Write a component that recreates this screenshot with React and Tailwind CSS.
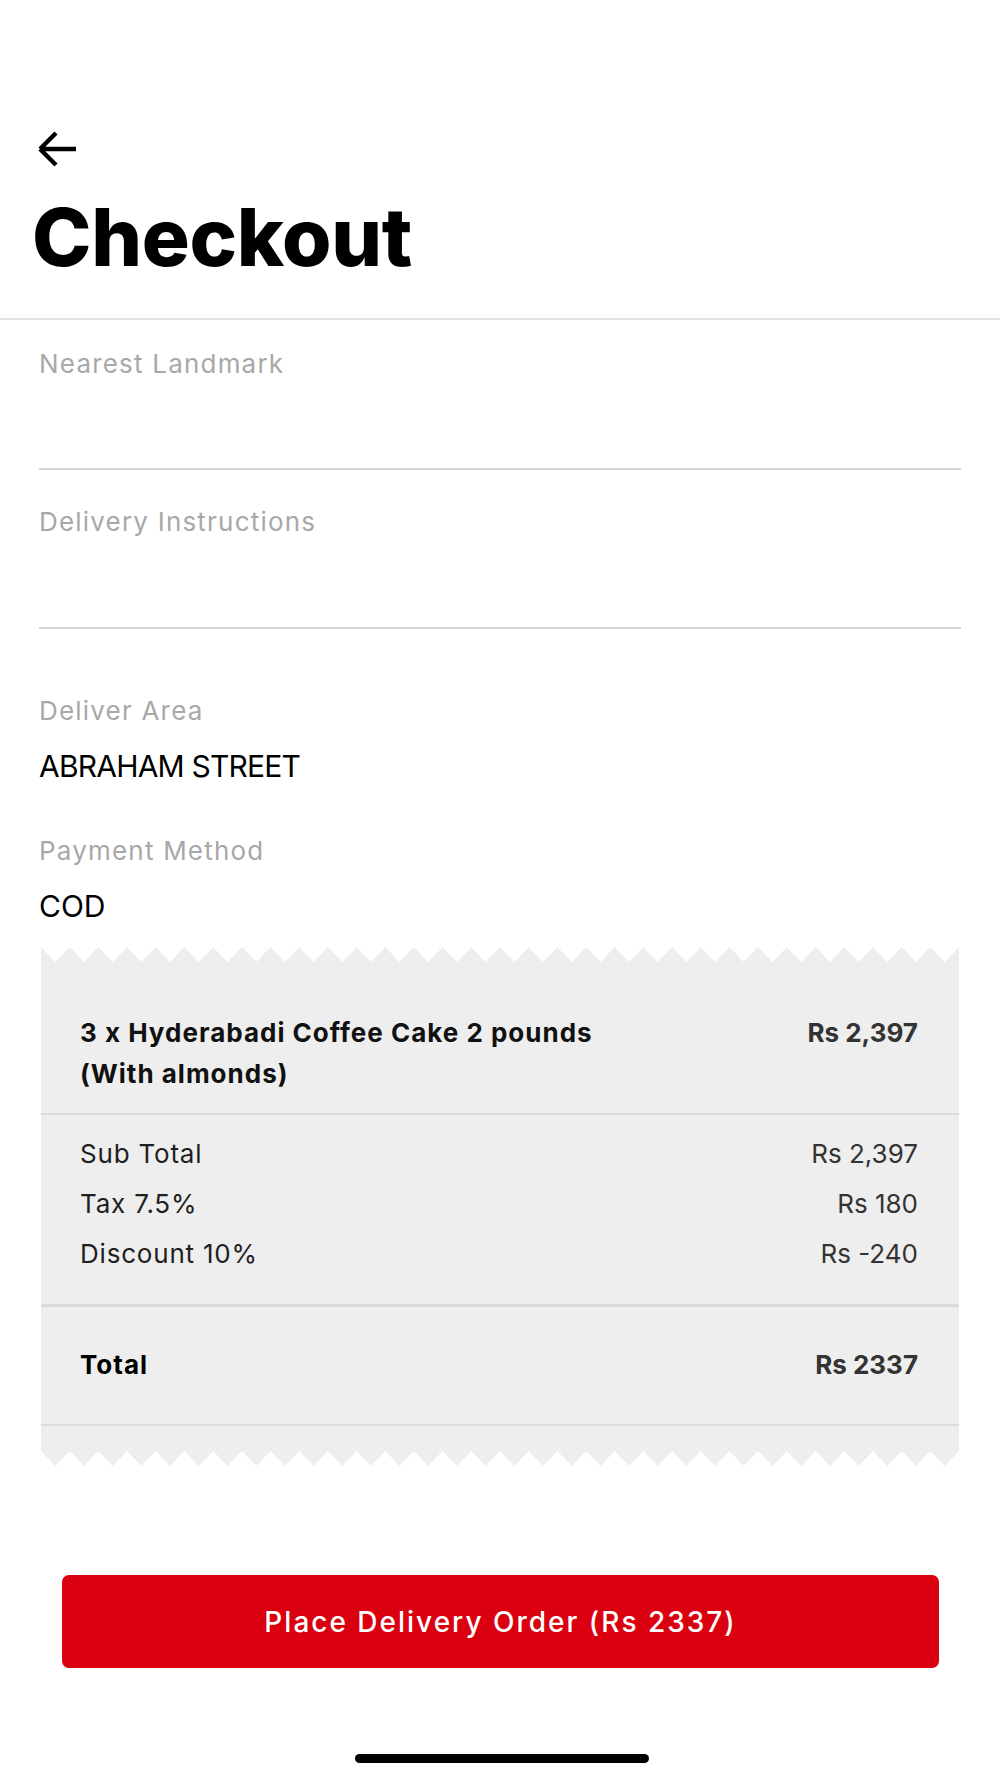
import React from 'react';

const font = { fontFamily: 'Inter, "Noto Sans", sans-serif' };

const Zigzag = ({ flip }) => {
  const teeth = 32;
  const w = 100 / teeth;
  let pts = flip ? '0,0 ' : '0,15 ';
  for (let i = 0; i < teeth; i++) {
    const x0 = i * w;
    if (flip) {
      pts += `${x0 + w / 2},15 ${x0 + w},0 `;
    } else {
      pts += `${x0},0 ${x0 + w / 2},15 `;
    }
  }
  pts += flip ? '100,0' : '100,0 100,15';
  return (
    <svg viewBox="0 0 100 15" preserveAspectRatio="none" className="block w-full h-[15px]">
      <polygon points={pts} fill="#eeeeee" />
    </svg>
  );
};

const Field = ({ label, className }) => (
  <div className={`border-b-2 border-[#d4d4d4] ${className}`}>
    <p className="text-[26px] leading-[24px] tracking-[1.2px] text-[#a8a8a8]">{label}</p>
  </div>
);

const Row = ({ label, value }) => (
  <div className="flex items-center justify-between h-[50px] text-[26px]">
    <span className="text-[#1f1f1f] tracking-[0.8px]">{label}</span>
    <span className="text-[#333333]">{value}</span>
  </div>
);

export default function App() {
  return (
    <div className="w-[1000px] h-[1778px] bg-white overflow-hidden" style={font}>
      {/* header */}
      <div className="pt-[131px] pb-[41px] px-[32px] border-b-2 border-[#e2e2e2]">
        <svg width="42" height="36" viewBox="0 0 42 36" className="block ml-[4px]" fill="none" stroke="#000" strokeWidth="4.4" strokeLinecap="butt">
          <path d="M4 18 L20 2 M4 18 L20 34 M4 18 H40" />
        </svg>
        <h1 className="mt-[30px] text-[80px] leading-[80px] font-extrabold tracking-[-0.3px] text-black">Checkout</h1>
      </div>

      <div className="px-[39px]">
        <Field label="Nearest Landmark" className="h-[150px] pt-[32px]" />
        <Field label="Delivery Instructions" className="h-[159px] pt-[40px]" />

        <p className="mt-[70px] text-[26px] leading-[24px] tracking-[1.2px] text-[#a8a8a8]">Deliver Area</p>
        <p className="mt-[28px] text-[30px] leading-[30px] text-black tracking-[-0.8px]">ABRAHAM STREET</p>
        <p className="mt-[58px] text-[26px] leading-[24px] tracking-[1.2px] text-[#a8a8a8]">Payment Method</p>
        <p className="mt-[28px] text-[30px] leading-[30px] text-black">COD</p>
      </div>

      {/* receipt */}
      <div className="mt-[26px] mx-[41px]">
        <Zigzag />
        <div className="bg-[#eeeeee]">
          <div className="flex justify-between pl-[39px] pr-[41px] pt-[50px] pb-[19px] border-b-2 border-[#dcdcdc] text-[26px] leading-[41px] font-bold">
            <span className="text-[#111111] tracking-[1px]">
              3 x Hyderabadi Coffee Cake 2 pounds
              <br />
              (With almonds)
            </span>
            <span className="text-[#333333]">Rs 2,397</span>
          </div>
          <div className="pl-[39px] pr-[41px] pt-[13px] pb-[26px] border-b-[3px] border-[#dadada]">
            <Row label="Sub Total" value="Rs 2,397" />
            <Row label="Tax 7.5%" value="Rs 180" />
            <Row label="Discount 10%" value="Rs -240" />
          </div>
          <div className="flex items-center justify-between h-[119px] pl-[39px] pr-[41px] pb-[3px] border-b-2 border-[#dcdcdc] text-[26px] font-bold">
            <span className="text-black tracking-[1px]">Total</span>
            <span className="text-[#333333]">Rs 2337</span>
          </div>
          <div className="h-[25px]" />
        </div>
        <Zigzag flip />
      </div>

      <div className="mt-[109px] pl-[62px] pr-[61px]">
        <button className="w-full h-[93px] rounded-[7px] bg-[#db000f] text-white text-[28px] font-medium tracking-[2px]">
          Place Delivery Order (Rs 2337)
        </button>
      </div>

      <div className="mt-[86px] flex justify-center">
        <div className="w-[294px] h-[9px] rounded-full bg-black ml-[4px]" />
      </div>
    </div>
  );
}
